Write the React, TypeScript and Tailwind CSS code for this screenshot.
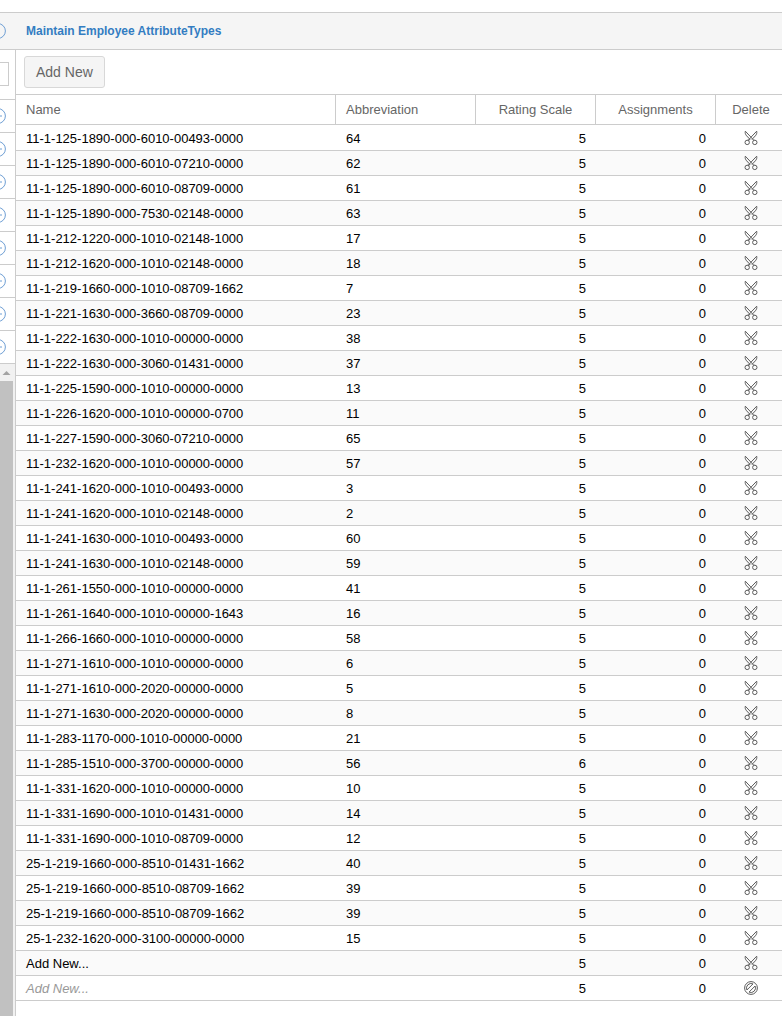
import { clsx } from "clsx";

interface AttributeType {
  name: string;
  abbreviation: string;
  scale?: number;
  placeholder?: boolean;
}

const attributeTypes: AttributeType[] = [
  { name: "11-1-125-1890-000-6010-00493-0000", abbreviation: "64" },
  { name: "11-1-125-1890-000-6010-07210-0000", abbreviation: "62" },
  { name: "11-1-125-1890-000-6010-08709-0000", abbreviation: "61" },
  { name: "11-1-125-1890-000-7530-02148-0000", abbreviation: "63" },
  { name: "11-1-212-1220-000-1010-02148-1000", abbreviation: "17" },
  { name: "11-1-212-1620-000-1010-02148-0000", abbreviation: "18" },
  { name: "11-1-219-1660-000-1010-08709-1662", abbreviation: "7" },
  { name: "11-1-221-1630-000-3660-08709-0000", abbreviation: "23" },
  { name: "11-1-222-1630-000-1010-00000-0000", abbreviation: "38" },
  { name: "11-1-222-1630-000-3060-01431-0000", abbreviation: "37" },
  { name: "11-1-225-1590-000-1010-00000-0000", abbreviation: "13" },
  { name: "11-1-226-1620-000-1010-00000-0700", abbreviation: "11" },
  { name: "11-1-227-1590-000-3060-07210-0000", abbreviation: "65" },
  { name: "11-1-232-1620-000-1010-00000-0000", abbreviation: "57" },
  { name: "11-1-241-1620-000-1010-00493-0000", abbreviation: "3" },
  { name: "11-1-241-1620-000-1010-02148-0000", abbreviation: "2" },
  { name: "11-1-241-1630-000-1010-00493-0000", abbreviation: "60" },
  { name: "11-1-241-1630-000-1010-02148-0000", abbreviation: "59" },
  { name: "11-1-261-1550-000-1010-00000-0000", abbreviation: "41" },
  { name: "11-1-261-1640-000-1010-00000-1643", abbreviation: "16" },
  { name: "11-1-266-1660-000-1010-00000-0000", abbreviation: "58" },
  { name: "11-1-271-1610-000-1010-00000-0000", abbreviation: "6" },
  { name: "11-1-271-1610-000-2020-00000-0000", abbreviation: "5" },
  { name: "11-1-271-1630-000-2020-00000-0000", abbreviation: "8" },
  { name: "11-1-283-1170-000-1010-00000-0000", abbreviation: "21" },
  { name: "11-1-285-1510-000-3700-00000-0000", abbreviation: "56", scale: 6 },
  { name: "11-1-331-1620-000-1010-00000-0000", abbreviation: "10" },
  { name: "11-1-331-1690-000-1010-01431-0000", abbreviation: "14" },
  { name: "11-1-331-1690-000-1010-08709-0000", abbreviation: "12" },
  { name: "25-1-219-1660-000-8510-01431-1662", abbreviation: "40" },
  { name: "25-1-219-1660-000-8510-08709-1662", abbreviation: "39" },
  { name: "25-1-219-1660-000-8510-08709-1662", abbreviation: "39" },
  { name: "25-1-232-1620-000-3100-00000-0000", abbreviation: "15" },
  { name: "Add New...", abbreviation: "" },
  { name: "Add New...", abbreviation: "", placeholder: true },
];

const menuItems = [1, 2, 3, 4, 5, 6, 7, 8];

function ScissorsIcon() {
  return (
    <svg viewBox="0 0 14 16" className="h-4 w-[14px]" fill="none" stroke="#5c5c5c">
      <path d="M1.3 1.2 C0.9 3 1.5 4.6 2.6 5.8 L6 9.4 C5.6 10 4.8 10.2 3.6 10.2 M1.3 1.2 L7 7.2 L9.4 10 C9.8 10.2 10 10.2 10.4 10.2" />
      <path d="M12.7 1.2 C13.1 3 12.5 4.6 11.4 5.8 L8 9.4 M12.7 1.2 L7 7.2 L4.6 10" />
      <circle cx="3.2" cy="12.4" r="2.2" />
      <circle cx="10.8" cy="12.4" r="2.2" />
    </svg>
  );
}

function BlockedIcon() {
  return (
    <svg viewBox="0 0 14 14" className="h-[14px] w-[14px]" fill="none" stroke="#5c5c5c">
      <circle cx="7" cy="7" r="6.4" />
      <path d="M2.9 9 A4.6 4.6 0 0 1 9 2.9 Z" />
      <path d="M11.1 5 A4.6 4.6 0 0 1 5 11.1 Z" />
    </svg>
  );
}

function CollapseIcon({ bar = true }: { bar?: boolean }) {
  return (
    <svg viewBox="0 0 8 16" className="h-4 w-2" fill="none" stroke="#6f9fd4">
      <circle cx="-2" cy="8" r="7.4" />
      {bar && <path d="M-6 8 H2" />}
    </svg>
  );
}

function Sidebar() {
  return (
    <aside className="flex w-4 shrink-0 flex-col border-r border-[#ccc]">
      <div className="h-[50px] border-b border-[#ccc] pt-3">
        <input aria-label="Search" className="block h-6 w-[9px] border border-l-0 border-[#ccc]" />
      </div>
      {menuItems.map((item) => (
        <button
          key={item}
          aria-label="Toggle section"
          className="flex h-[33px] items-center border-b border-[#ccc]"
        >
          <CollapseIcon />
        </button>
      ))}
      <div className="flex flex-1 flex-col bg-[#f1f1f1] pr-0.5">
        <svg viewBox="0 0 13 17" className="h-[17px] w-[13px]" fill="#a3a3a3">
          <path d="M2.5 11 L6.5 7 L10.5 11 Z" />
        </svg>
        <div className="flex-1 bg-[#c1c1c1]" />
      </div>
    </aside>
  );
}

function AttributeTable() {
  const th = "border-r border-b border-[#ccc] px-[10px] font-normal";
  const td = "px-[10px] pt-0.5";

  return (
    <table className="w-full table-fixed border-separate border-spacing-0 text-[13px] leading-4">
      <colgroup>
        <col />
        <col className="w-[140px]" />
        <col className="w-[120px]" />
        <col className="w-[120px]" />
        <col className="w-[66px]" />
      </colgroup>
      <thead>
        <tr className="h-[30px] text-[#666]">
          <th className={clsx(th, "text-left")}>Name</th>
          <th className={clsx(th, "text-left")}>Abbreviation</th>
          <th className={clsx(th, "text-center")}>Rating Scale</th>
          <th className={clsx(th, "text-center")}>Assignments</th>
          <th className="border-b border-[#ccc] pl-1 text-center font-normal">Delete</th>
        </tr>
      </thead>
      <tbody className="[&_td]:border-b [&_td]:border-[#ccc]">
        {attributeTypes.map((row, i) => (
          <tr key={i} className="h-[25px] first:h-[26px] even:bg-[#fafafa]">
            <td className={clsx(td, row.placeholder && "text-[#999] italic")}>{row.name}</td>
            <td className={td}>{row.abbreviation}</td>
            <td className={clsx(td, "text-right")}>{row.scale ?? 5}</td>
            <td className={clsx(td, "text-right")}>0</td>
            <td className="pl-1">
              <button aria-label="Delete" className="mx-auto flex h-4 items-center">
                {row.placeholder ? <BlockedIcon /> : <ScissorsIcon />}
              </button>
            </td>
          </tr>
        ))}
      </tbody>
    </table>
  );
}

export default function App() {
  return (
    <div className="flex min-h-screen flex-col overflow-hidden bg-white pt-3 font-['Liberation_Sans',Arial,sans-serif] text-black">
      <header className="flex h-[38px] items-center border-y border-[#ccc] bg-[#f5f5f5]">
        <button aria-label="Collapse menu" className="w-[26px]">
          <CollapseIcon bar={false} />
        </button>
        <h1 className="text-[12px] font-bold text-[#337dc2]">Maintain Employee AttributeTypes</h1>
      </header>
      <div className="flex flex-1">
        <Sidebar />
        <main className="min-w-0 flex-1">
          <div className="flex h-[45px] items-center border-b border-[#ccc] px-2">
            <button className="h-8 rounded-[3px] border border-[#d8d8d8] bg-[#f5f5f5] px-[11px] text-[14px] text-[#666]">
              Add New
            </button>
          </div>
          <AttributeTable />
        </main>
      </div>
    </div>
  );
}
